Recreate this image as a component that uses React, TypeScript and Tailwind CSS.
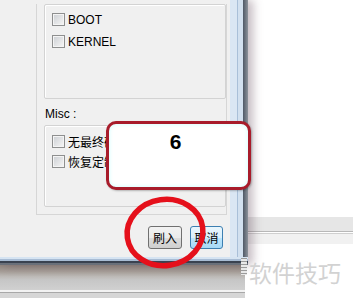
import React from "react";

const font = { fontFamily: '"Liberation Sans", "Noto Sans CJK SC", Arial, sans-serif' };
const cjk = { fontFamily: '"Noto Sans CJK SC", "Liberation Sans", sans-serif' };

function Check({ label }: { label: string }) {
  return (
    <div className="flex h-[13px] items-center whitespace-nowrap">
      <div className="h-[13px] w-[13px] shrink-0 border border-[#8e8f8f] bg-[#f4f4f4] p-[1px]">
        <div className="h-full w-full bg-[linear-gradient(135deg,#cfd2d6,#f3f3f3)]" />
      </div>
      <span className="ml-[3px] text-[12px] leading-[14px] text-black">{label}</span>
    </div>
  );
}

export default function App() {
  return (
    <div className="relative h-[298px] w-[353px] overflow-hidden bg-white" style={font}>
      <div className="flex h-[265px]">
        {/* dialog */}
        <div className="relative z-10 flex w-[248px] shrink-0 flex-col shadow-[5px_0_9px_rgba(90,60,80,0.35)]">
          <div className="flex h-[257px]">
            <div className="w-[230px] bg-[#f0f0f0]">
              <div className="ml-[36px] h-[211px] w-[191px] border-x border-b border-[#d6d6d6] pl-[7px]">
                <div className="mt-[4px] h-[95px] w-[182px] rounded-[2px] border border-[#d3d3d3] pl-[7px] pt-[8px] shadow-[inset_1px_1px_0_#ffffff]">
                  <div className="flex flex-col gap-[9px]">
                    <Check label="BOOT" />
                    <Check label="KERNEL" />
                  </div>
                </div>
                <div className="ml-[1px] mt-[8px] h-[14px] text-[12px] leading-[14px] text-black">Misc :</div>
                <div className="mt-[4px] h-[82px] w-[182px] rounded-[2px] border border-[#d3d3d3] pl-[7px] pt-[9px] shadow-[inset_1px_1px_0_#ffffff]">
                  <div className="flex flex-col gap-[7px]" style={cjk}>
                    <Check label="无最终确认" />
                    <Check label="恢复定制" />
                  </div>
                </div>
              </div>
              <div className="mt-[11px] flex gap-[8px] pl-[148px]" style={cjk}>
                <div className="flex h-[23px] w-[34px] items-center justify-center rounded-[3px] border border-[#707070] bg-[linear-gradient(#f2f2f2_0%,#ebebeb_50%,#dddddd_51%,#cfcfcf_100%)] text-[12px] text-black">
                  刷入
                </div>
                <div className="flex h-[23px] w-[33px] items-center justify-center rounded-[3px] border border-[#3c7fb1] bg-[linear-gradient(#eaf6fd_0%,#d9f0fc_50%,#bee6fd_51%,#a7d9f5_100%)] text-[12px] text-black">
                  取消
                </div>
              </div>
            </div>
            <div className="w-[7px] bg-[#dae6f3]" />
            <div className="w-[1px] bg-[#a9bfd8]" />
            <div className="w-[5px] bg-[#d2e0ef]" />
            <div className="w-[5px] bg-[linear-gradient(90deg,#4f5866,#8c929a)]" />
          </div>
          <div className="h-[8px] bg-[linear-gradient(#d6e4f2_0%,#d6e4f2_25%,#a8bcd4_25%,#a8bcd4_50%,#3a4250_50%,#3a4250_75%,#6a707a_75%)]" />
        </div>
        {/* right background window */}
        <div className="flex flex-1 flex-col">
          <div className="h-[217px]" />
          <div className="h-[14px] bg-[#e6e6e6]" />
          <div className="h-[1px] bg-[#b8b8b8]" />
          <div className="h-[1px] bg-white" />
          <div className="h-[1px] bg-[#cfcfcf]" />
          <div className="h-[10px] bg-[#f1f1f1]" />
        </div>
      </div>
      <div className="flex h-[33px]">
        <div className="w-[245px] bg-[linear-gradient(#8f857e_0%,#a69e98_20%,#bdbab7_35%,#c6c6c6_45%,#d0d0d0_75%,#f2f2f2_76%,#f2f2f2_82%,#a8a8a8_82%,#a8a8a8_85%,#d6d6d6_85%)]" />
        <div className="flex-1" />
      </div>

      {/* watermark */}
      <div className="absolute left-[241px] top-[258px] z-20 h-[17px] w-[6px] bg-[repeating-linear-gradient(#9a9a9a_0px,#9a9a9a_1px,#e8e8e8_1px,#e8e8e8_3px)]" />
      <div className="absolute left-[249px] top-[257px] z-20 text-[23px] leading-[30px] text-[#d2d2d2]" style={cjk}>
        软件技巧
      </div>

      {/* callout */}
      <div className="absolute left-[106px] top-[121px] z-20 h-[69px] w-[145px] rounded-[10px] border-[3px] border-[#a81c2b] bg-white pr-[6px] pt-[6px] text-center shadow-[inset_0_0_4px_#c8ffff,1px_1px_2px_rgba(0,0,0,0.25)]">
        <span className="text-[21px] font-bold leading-[24px] text-black" style={font}>6</span>
      </div>

      {/* red ellipse */}
      <svg className="absolute left-[121px] top-[194px] z-20" width="88" height="78" viewBox="0 0 88 78">
        <ellipse cx="44" cy="38.5" rx="38" ry="33" fill="none" stroke="#e5101b" strokeWidth="5.5" transform="rotate(-8 44 38.5)" />
      </svg>
    </div>
  );
}
